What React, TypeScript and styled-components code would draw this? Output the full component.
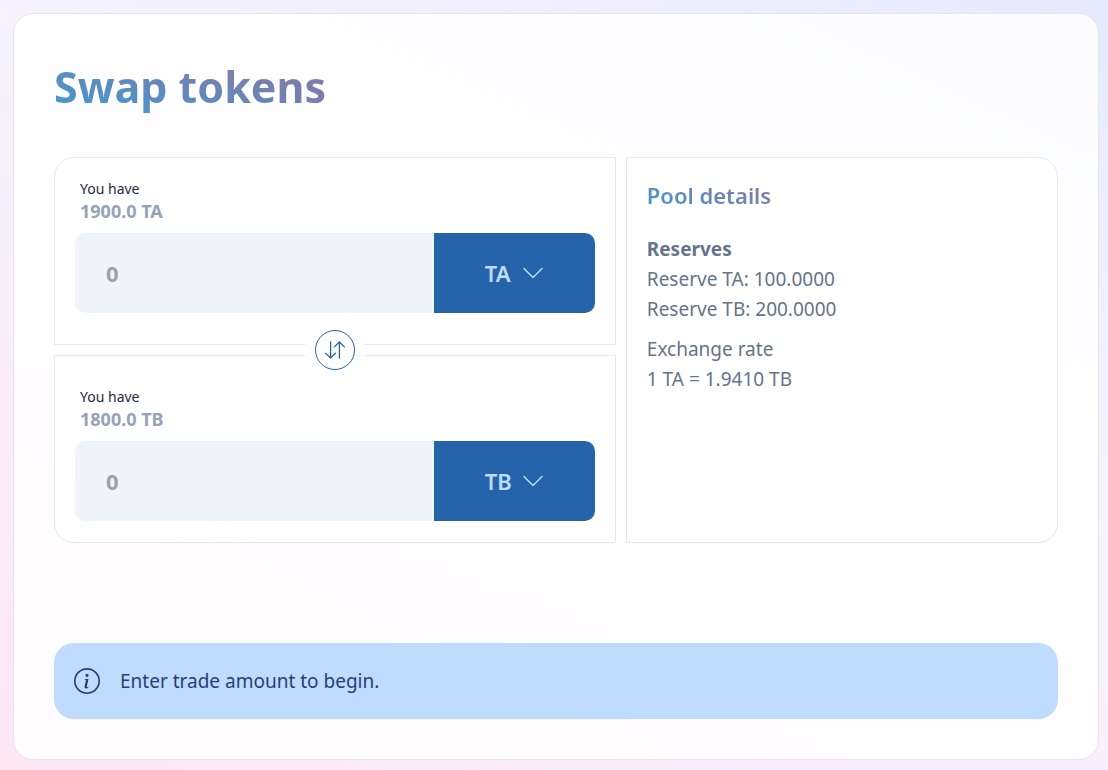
import { useState } from "react";
import styled, { createGlobalStyle } from "styled-components";
import { BsArrowDownUp, BsChevronDown, BsInfoCircle } from "react-icons/bs";

const GlobalStyle = createGlobalStyle`
  *, *::before, *::after { box-sizing: border-box; }
  body {
    margin: 0;
    font-family: "Segoe UI", "Noto Sans", sans-serif;
    font-size: 19px;
    line-height: 30px;
    color: #64748b;
  }
  button, input, select { font: inherit; }
`;

const Page = styled.div`
  display: flex;
  min-height: 100vh;
  padding: 13px 9px 10px 13px;
  background: linear-gradient(25deg, #fce7f3, #f9effd 38%, #f6f3ff 62%, #e6e9ff);
`;

const Card = styled.main`
  flex: 1;
  min-width: 0;
  padding: 40px;
  border: 1px solid #e6e5ec;
  border-radius: 20px;
  background: rgba(255, 255, 255, 0.85);
`;

const gradientText = `
  width: fit-content;
  margin: 0;
  color: transparent;
  background: linear-gradient(to top right, #3b9dd2, #94709c);
  background-clip: text;
  -webkit-background-clip: text;
`;

const Title = styled.h1`
  ${gradientText}
  font-size: 43px;
  line-height: 66px;
  font-weight: 700;
`;

const Columns = styled.div`
  display: grid;
  grid-template-columns: 1.3fr 1fr;
  gap: 10px;
  margin-top: 37px;
`;

const SwapColumn = styled.div`
  position: relative;
  display: grid;
  gap: 10px;
`;

const Panel = styled.section<{ $corner: "top" | "bottom" | "side" }>`
  min-width: 0;
  min-height: 188px;
  border: 1px solid #e8e8ec;
  background: rgba(255, 255, 255, 0.7);
  padding: ${({ $corner }) => ({ top: "21px 20px 20px", bottom: "31px 20px 20px", side: "20px" })[$corner]};
  border-radius: ${({ $corner }) =>
    ({ top: "20px 0 0 0", bottom: "0 0 0 20px", side: "0 20px 20px 0" })[$corner]};
`;

const Balance = styled.div`
  padding: 0 5px;
  margin-bottom: 9px;
`;

const BalanceLabel = styled.label`
  display: block;
  font-size: 14px;
  line-height: 20px;
  color: #1e293b;
`;

const BalanceValue = styled.div`
  font-size: 18px;
  line-height: 25px;
  font-weight: 700;
  color: #94a3b8;
`;

const Field = styled.div`
  display: flex;
  height: 80px;
  border-radius: 10px;
  overflow: hidden;
`;

const Amount = styled.input`
  flex: 1;
  min-width: 0;
  padding: 0 31px;
  border: 0;
  outline: 0;
  background: #f1f5f9;
  font-size: 22px;
  font-weight: 700;
  color: #64748b;
  &::placeholder { color: #9ca3af; opacity: 1; }
`;

const TokenPicker = styled.div`
  display: grid;
  flex: none;
  width: 161px;
  align-items: center;
  background: #2563ab;
  color: #bfdbfe;
  > * { grid-area: 1 / 1; }
  > svg { justify-self: end; margin-right: 50px; pointer-events: none; }
`;

const TokenSelect = styled.select`
  width: 100%;
  height: 100%;
  padding: 0 51px;
  border: 0;
  appearance: none;
  background: transparent;
  color: inherit;
  font-size: 22px;
  font-weight: 600;
  cursor: pointer;
  option { color: #1e293b; }
`;

const SwitchSlot = styled.div`
  position: absolute;
  top: 50%;
  left: 50%;
  transform: translate(-50%, -50%);
  padding: 0 10px;
  background: #fefefe;
`;

const SwitchButton = styled.button`
  display: flex;
  align-items: center;
  justify-content: center;
  width: 40px;
  height: 40px;
  padding: 0;
  border: 1px solid #2563ab;
  border-radius: 50%;
  background: #fff;
  color: #2563ab;
  cursor: pointer;
`;

const PoolTitle = styled.h2`
  ${gradientText}
  font-size: 22px;
  line-height: 34px;
  font-weight: 600;
`;

const PoolHeading = styled.h3`
  margin: 22px 0 0;
  font-size: 19px;
  line-height: 30px;
  font-weight: 700;
`;

const PoolLine = styled.p`
  margin: 0;
`;

const ExchangeRate = styled.div`
  margin-top: 10px;
`;

const Notice = styled.div`
  display: flex;
  align-items: center;
  gap: 20px;
  min-height: 76px;
  margin-top: 100px;
  padding: 20px;
  border-radius: 20px;
  background: #bfdbfe;
  color: #1e4379;
  svg { flex: none; }
`;

type Token = "TA" | "TB";
const balances: Record<Token, string> = { TA: "1900.0", TB: "1800.0" };

interface TokenPanelProps {
  id: string;
  corner: "top" | "bottom";
  token: Token;
  onToken: (token: Token) => void;
}

function TokenPanel({ id, corner, token, onToken }: TokenPanelProps) {
  return (
    <Panel $corner={corner}>
      <Balance>
        <BalanceLabel htmlFor={id}>You have</BalanceLabel>
        <BalanceValue>{balances[token]} {token}</BalanceValue>
      </Balance>
      <Field>
        <Amount id={id} inputMode="decimal" placeholder="0" />
        <TokenPicker>
          <TokenSelect
            aria-label="Token"
            value={token}
            onChange={(event) => onToken(event.target.value as Token)}
          >
            <option>TA</option>
            <option>TB</option>
          </TokenSelect>
          <BsChevronDown size={24} aria-hidden />
        </TokenPicker>
      </Field>
    </Panel>
  );
}

export default function App() {
  const [from, setFrom] = useState<Token>("TA");
  const to: Token = from === "TA" ? "TB" : "TA";

  return (
    <>
      <GlobalStyle />
      <Page>
        <Card>
          <Title>Swap tokens</Title>
          <Columns>
            <SwapColumn>
              <TokenPanel id="pay" corner="top" token={from} onToken={setFrom} />
              <TokenPanel
                id="receive"
                corner="bottom"
                token={to}
                onToken={(token) => setFrom(token === "TA" ? "TB" : "TA")}
              />
              <SwitchSlot>
                <SwitchButton type="button" aria-label="Switch tokens" onClick={() => setFrom(to)}>
                  <BsArrowDownUp size={20} />
                </SwitchButton>
              </SwitchSlot>
            </SwapColumn>
            <Panel $corner="side">
              <PoolTitle>Pool details</PoolTitle>
              <PoolHeading>Reserves</PoolHeading>
              <PoolLine>Reserve TA: 100.0000</PoolLine>
              <PoolLine>Reserve TB: 200.0000</PoolLine>
              <ExchangeRate>
                <PoolLine>Exchange rate</PoolLine>
                <PoolLine>1 TA = 1.9410 TB</PoolLine>
              </ExchangeRate>
            </Panel>
          </Columns>
          <Notice role="status">
            <BsInfoCircle size={26} aria-hidden />
            Enter trade amount to begin.
          </Notice>
        </Card>
      </Page>
    </>
  );
}
